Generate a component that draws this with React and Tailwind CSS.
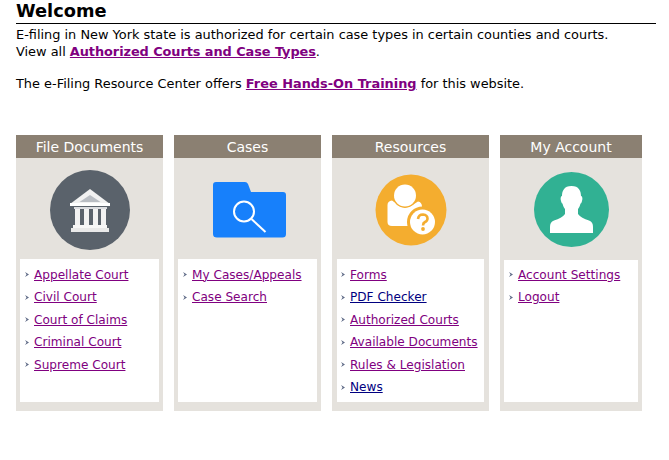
const cards = [
  {
    title: "File Documents",
    width: "w-[147px]",
    iconBox: "h-[101px] pt-[3px]",
    listBox: "h-[143px] pt-[5px]",
    listClass: "mx-1 pl-[5px]",
    links: [["Appellate Court"], ["Civil Court"], ["Court of Claims"], ["Criminal Court"], ["Supreme Court"]],
    icon: <BankIcon />,
  },
  {
    title: "Cases",
    width: "w-[147px]",
    iconBox: "h-[101px] pt-[3px]",
    listBox: "h-[143px] pt-[5px]",
    listClass: "mx-1 pl-[5px]",
    links: [["My Cases/Appeals"], ["Case Search"]],
    icon: <FolderIcon />,
  },
  {
    title: "Resources",
    width: "w-[157px]",
    iconBox: "h-[101px] pt-[3px]",
    listBox: "h-[143px] pt-[5px]",
    listClass: "mx-[5px] pl-[4px]",
    links: [["Forms"], ["PDF Checker", true], ["Authorized Courts"], ["Available Documents"], ["Rules & Legislation"], ["News", true]],
    icon: <ResourcesIcon />,
  },
  {
    title: "My Account",
    width: "w-[142px]",
    iconBox: "h-[102px] pt-[2px]",
    listBox: "h-[142px] pt-[4px]",
    listClass: "mx-1 pl-[5px]",
    links: [["Account Settings"], ["Logout"]],
    icon: <AccountIcon />,
  },
];

function BankIcon() {
  return (
    <svg width="80" height="80" viewBox="0 0 80 80">
      <circle cx="40" cy="40" r="40" fill="#5a626b" />
      <path d="M40 19 L60 34 H20 Z" fill="#f1f1f1" />
      <path d="M40 25 L50.5 32 H29.5 Z" fill="#b9bdc3" />
      <rect x="20" y="33" width="40" height="3" fill="#ffffff" />
      <rect x="24" y="37" width="33" height="2" fill="#dcdde0" />
      <rect x="25" y="39" width="5" height="17" fill="#f2f2f2" />
      <rect x="34" y="39" width="5" height="17" fill="#f2f2f2" />
      <rect x="43" y="39" width="5" height="17" fill="#f2f2f2" />
      <rect x="51" y="39" width="5" height="17" fill="#f2f2f2" />
      <rect x="23" y="55" width="34" height="3" fill="#f7f7f7" />
      <rect x="21" y="58" width="38" height="4" fill="#e9e9e9" />
    </svg>
  );
}

function FolderIcon() {
  return (
    <svg width="73" height="56" viewBox="0 0 73 56" className="ml-[3px]">
      <path
        d="M3 0 H32 Q34 0 35 2 L38 10 H70 Q73 10 73 13 V52 Q73 55.5 69.5 55.5 H4 Q0 55.5 0 52 V3 Q0 0 3 0 Z"
        fill="#1780fb"
      />
      <circle cx="31" cy="29.5" r="10" fill="none" stroke="#ffffff" strokeWidth="2" />
      <path d="M38.5 37 L52.5 50" stroke="#ffffff" strokeWidth="2" />
    </svg>
  );
}

function ResourcesIcon() {
  return (
    <svg width="72" height="72" viewBox="0 0 72 72">
      <circle cx="36" cy="36" r="35.5" fill="#f4ad2f" />
      <path d="M17 26.5 Q20 28 22 31 Q30 37 38 31 Q40 29 43 27.5 Q47 28 47 33 V52 H17 Q12.5 52 12.5 48 V31 Q12.5 27 17 26.5 Z" fill="#ffffff" />
      <circle cx="30" cy="21.5" r="12" fill="#f4ad2f" />
      <circle cx="30" cy="21.5" r="11" fill="#ffffff" />
      <circle cx="47.5" cy="48" r="15.5" fill="#f4ad2f" />
      <circle cx="47.5" cy="48" r="12.5" fill="#ffffff" />
      <path d="M43 45 Q43.5 40.5 48 40.5 Q52.5 41 52.5 44.5 Q52.5 47 50 48 Q48 49 48 51.5" fill="none" stroke="#f4ad2f" strokeWidth="2.6" />
      <circle cx="48" cy="55" r="1.9" fill="#f4ad2f" />
    </svg>
  );
}

function AccountIcon() {
  return (
    <svg width="75" height="75" viewBox="0 0 75 75">
      <circle cx="37.5" cy="37.5" r="37.5" fill="#31b193" />
      <path
        d="M37.5 14 C45 14 47 19 47 24 C48 24 49 26 48 29 C47.5 31 47 31.5 46.5 31.5 C46 34 45 36 44 37 V42 C46 45 50 47 55 48.5 C58 49.5 59 52 59 55 V61 H16 V55 C16 52 17 49.5 20 48.5 C25 47 29 45 31 42 V37 C30 36 29 34 28.5 31.5 C28 31.5 27.5 31 27 29 C26 26 27 24 28 24 C28 19 30 14 37.5 14 Z"
        fill="#ffffff"
      />
    </svg>
  );
}

function Card({ card }) {
  return (
    <div className={`${card.width} bg-[#e5e2dd] pb-[9px]`}>
      <div className="h-[23px] bg-[#8b8072] text-center text-[14px] leading-[25px] text-white">{card.title}</div>
      <div className={`${card.iconBox} flex items-center justify-center`}>{card.icon}</div>
      <ul className={`${card.listClass} ${card.listBox} bg-white text-[12.1px]`}>
        {card.links.map(([label, unvisited]) => (
          <li key={label} className="flex h-[22.5px] items-center gap-[5px]">
            <svg width="4" height="5" viewBox="0 0 4 5" className="shrink-0">
              <path d="M0 0 L4 2.5 L0 5 L1.5 2.5 Z" fill="#5f6a86" />
            </svg>
            <a href="#" className={`underline ${unvisited ? "text-[#000080]" : "text-[#800080]"}`}>
              {label}
            </a>
          </li>
        ))}
      </ul>
    </div>
  );
}

export default function App() {
  return (
    <div className="h-[460px] w-[669px] overflow-hidden bg-white font-['DejaVu_Sans',Verdana,sans-serif] text-[12.9px] text-black">
      <div className="ml-4 w-[640px]">
        <h1 className="h-[24px] border-b border-black text-[17.8px] leading-[21px] font-bold">Welcome</h1>
        <p className="mt-[3px] leading-[16.5px]">
          E-filing in New York state is authorized for certain case types in certain counties and courts.
          <br />
          View all{" "}
          <a href="#" className="font-bold tracking-[-0.07px] text-[#800080] underline">
            Authorized Courts and Case Types
          </a>
          .
        </p>
        <p className="mt-[16px] leading-[16.5px]">
          The e-Filing Resource Center offers{" "}
          <a href="#" className="font-bold text-[#800080] underline">
            Free Hands-On Training
          </a>{" "}
          for this website.
        </p>
      </div>
      <div className="mt-[42px] ml-4 flex gap-[11px]">
        {cards.map((card) => (
          <Card key={card.title} card={card} />
        ))}
      </div>
    </div>
  );
}
